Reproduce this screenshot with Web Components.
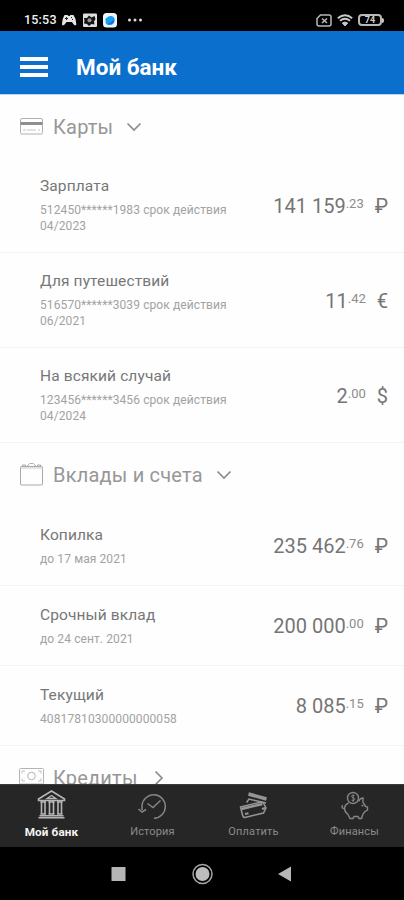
<!DOCTYPE html>
<html lang="ru">
<head>
<meta charset="utf-8">
<title>Мой банк</title>
<style>
    body {
        margin: 0;
        font-family: Roboto, "Liberation Sans", sans-serif;
        background: #fff;
    }
</style>
</head>
<body>
<bank-app></bank-app>

<script>
class StatusBar extends HTMLElement {
    constructor(){
        super();
        this.attachShadow({mode: 'open'})
        this.shadowRoot.innerHTML = `
            <style>
                :host {
                    display: flex;
                    align-items: center;
                    flex: none;
                    height: 31px;
                    padding: 8px 20px 0 24px;
                    box-sizing: border-box;
                    background: #000;
                    color: #f2f2f2;
                }
                .time {
                    width: 37px;
                    font-size: 12.5px;
                    font-weight: 500;
                    line-height: 23px;
                    letter-spacing: 0.2px;
                }
                svg {
                    display: block;
                }
                .right {
                    display: flex;
                    align-items: center;
                    gap: 5px;
                    margin-left: auto;
                    margin-top: 1px;
                }
                .battery {
                    display: flex;
                    align-items: center;
                }
                .level {
                    width: 24px;
                    height: 12px;
                    box-sizing: border-box;
                    border: 2px solid #b8b8b8;
                    border-radius: 4px;
                    font-size: 9px;
                    font-weight: 700;
                    line-height: 9px;
                    text-align: center;
                    color: #d0d0d0;
                }
                .cap {
                    width: 2px;
                    height: 5px;
                    background: #c4c4c4;
                    border-radius: 0 2px 2px 0;
                }
            </style>
            <span class="time">15:53</span>
            <svg width="84" height="16" viewBox="0 0 84 16">
                <path d="M3.5 3h3l1 1h1l1-1h3l2 4 .8 5c0 2-2 1.500-3 0L11 10H5.500L4 12c-1 1.500-3 2-3 0l.7-5z" fill="#e6e6e6"/>
                <path d="M4 6.500h3M5.500 5v3M10 5.500h1M11 7.500h1" stroke="#222" stroke-width="1"/>
                <rect x="22" y="1.500" width="14" height="13.500" rx="1" fill="#dedede"/>
                <path d="M28 3.500l2.500 2 3-1.500 1 3-1.500 2.500.5 3-3-.5-2.500 2-2-2-3-.5.5-3L23 6l3 0z" fill="#151515"/>
                <circle cx="28.500" cy="8.300" r="2" fill="#999"/>
                <rect x="42" y="1" width="14" height="14.500" rx="3.500" fill="#eef6fb"/>
                <path d="M44.500 6.500c2-1 3-3 6-2.500 4 .5 4 6 1.500 8-2 1.500-6 1.500-7-.5-.6-1.500-.5-3.500-.5-5z" fill="#18a0f0"/>
                <path d="M47.500 11c2 0 4-2 5.500-4 .6 3-1 6-5 5.500z" fill="#2269db"/>
                <circle cx="68.500" cy="8" r="1.500" fill="#ddd"/>
                <circle cx="74" cy="8" r="1.500" fill="#ddd"/>
                <circle cx="79.500" cy="8" r="1.500" fill="#ddd"/>
            </svg>
            <div class="right">
                <svg width="16" height="13" viewBox="0 0 16 13" fill="none" stroke="#b8b8b8" stroke-width="1.500">
                    <path d="M4.500 1H13q2 0 2 2v7q0 2-2 2H3q-2 0-2-2V4.500z"/>
                    <path d="M6 4.500l5 4.500M11 4.500L6 9" stroke-width="1.600"/>
                </svg>
                <svg width="16" height="13" viewBox="0 0 16 13" fill="none" stroke="#c8c8c8" stroke-width="1.900">
                    <path d="M.8 4.200Q8-1.700 15.200 4.200"/>
                    <path d="M3 6.800q5-4 10 0"/>
                    <path d="M5.300 9q2.700-2 5.400 0L8 12z" fill="#c8c8c8" stroke-width="1"/>
                </svg>
                <div class="battery"><div class="level">74</div><div class="cap"></div></div>
            </div>
        `;
    }
}

class AppHeader extends HTMLElement {
    constructor(){
        super();
        this.attachShadow({mode: 'open'})
        this.shadowRoot.innerHTML = `
            <style>
                :host {
                    display: flex;
                    align-items: center;
                    flex: none;
                    gap: 28px;
                    height: 63px;
                    padding: 9px 20px 0;
                    box-sizing: border-box;
                    background: #0b6fce;
                    color: #fff;
                }
                .menu {
                    display: grid;
                    gap: 4px;
                    width: 28px;
                    margin-top: -1px;
                }
                .menu i {
                    height: 4px;
                    background: #fff;
                }
                h1 {
                    margin: 0;
                    font-size: 22.5px;
                    font-weight: 700;
                    line-height: 30px;
                }
            </style>
            <div class="menu"><i></i><i></i><i></i></div>
            <h1><slot></slot></h1>
        `;
    }
}

class AccountSection extends HTMLElement {
    constructor(){
        super();
        this.attachShadow({mode: 'open'})
        this.shadowRoot.innerHTML = `
            <style>
                :host {
                    display: block;
                }
                header {
                    display: flex;
                    align-items: center;
                    height: 63px;
                    padding: 3px 0 0 19px;
                    box-sizing: border-box;
                    color: #979797;
                }
                .icon {
                    width: 26px;
                    height: 26px;
                    margin-right: 8px;
                }
                h2 {
                    margin: 0 13px 0 0;
                    font-size: 20px;
                    font-weight: 400;
                    line-height: 26px;
                    letter-spacing: 0.2px;
                }
                svg {
                    display: block;
                }
                :host([collapsed]) .chevron {
                    transform: rotate(-90deg);
                }
            </style>
            <header>
                <div class="icon"><slot name="icon"></slot></div>
                <h2></h2>
                <svg class="chevron" width="16" height="16" viewBox="0 0 16 16" fill="none" stroke="#8c8c8c" stroke-width="1.700"><path d="M1.500 4.500l6.500 6.500 6.500-6.500"/></svg>
            </header>
            <slot></slot>
        `;
    }

    connectedCallback(){
        this.shadowRoot.querySelector('h2').textContent = this.getAttribute('heading');
    }
}

class AccountRow extends HTMLElement {
    constructor(){
        super();
        this.attachShadow({mode: 'open'})
        this.shadowRoot.innerHTML = `
            <style>
                :host {
                    display: flex;
                    align-items: center;
                    justify-content: space-between;
                    height: 80px;
                    padding: 1px 16px 0 40px;
                    box-sizing: border-box;
                    box-shadow: 0 1px 0 #f3f3f3;
                }
                :host([card]) {
                    height: 95px;
                }
                .name {
                    font-size: 15.5px;
                    line-height: 20px;
                    letter-spacing: 0.12px;
                    color: #777;
                }
                .details {
                    width: 200px;
                    margin-top: 6px;
                    font-size: 12px;
                    line-height: 16px;
                    letter-spacing: 0.1px;
                    color: #a2a2a2;
                }
                .amount {
                    display: flex;
                    align-items: flex-start;
                    line-height: 24px;
                    font-size: 20px;
                    color: #757575;
                    white-space: nowrap;
                    margin-top: 1px;
                }
                .cents {
                    font-size: 13px;
                    line-height: 20px;
                    color: #8c8c8c;
                }
                .currency {
                    margin-left: 11px;
                }
            </style>
            <div>
                <div class="name"></div>
                <div class="details"><slot></slot></div>
            </div>
            <div class="amount"><span class="whole"></span><span class="cents"></span><span class="currency"></span></div>
        `;
    }

    connectedCallback(){
        const [whole, cents] = this.getAttribute('amount').split('.');
        this._setText('.whole', whole);
        this._setText('.cents', '.' + cents);
        this._setText('.name', this.getAttribute('name'));
        this._setText('.currency', this.getAttribute('currency'));
    }

    _setText(selector, text){
        this.shadowRoot.querySelector(selector).textContent = text;
    }
}

class TabItem extends HTMLElement {
    constructor(){
        super();
        this.attachShadow({mode: 'open'})
        this.shadowRoot.innerHTML = `
            <style>
                :host {
                    display: flex;
                    flex-direction: column;
                    align-items: center;
                    padding: 5px 0 0 2px;
                    color: #8b8b8b;
                    font-size: 11px;
                    line-height: 16px;
                    letter-spacing: 0.15px;
                }
                :host([active]) {
                    color: #f4f4f4;
                    font-size: 11.7px;
                    font-weight: 700;
                }
                .icon {
                    height: 32px;
                    margin-bottom: 2px;
                }
            </style>
            <div class="icon"><slot name="icon"></slot></div>
            <div><slot></slot></div>
        `;
    }
}

class TabBar extends HTMLElement {
    constructor(){
        super();
        this.attachShadow({mode: 'open'})
        this.shadowRoot.innerHTML = `
            <style>
                :host {
                    display: grid;
                    grid-template-columns: repeat(4, 1fr);
                    flex: none;
                    height: 63px;
                    box-sizing: border-box;
                    background: #262626;
                    border-top: 1px solid #3b3b3b;
                }
            </style>
            <slot></slot>
        `;
    }
}

class SystemNav extends HTMLElement {
    constructor(){
        super();
        this.attachShadow({mode: 'open'})
        this.shadowRoot.innerHTML = `
            <style>
                :host {
                    display: flex;
                    align-items: center;
                    justify-content: center;
                    flex: none;
                    gap: 59px;
                    height: 53px;
                    background: #000;
                }
            </style>
            <svg width="24" height="24" viewBox="0 0 24 24"><rect x="4.500" y="5" width="14" height="14" fill="#b5b5b5"/></svg>
            <svg width="24" height="24" viewBox="0 0 24 24"><circle cx="12.500" cy="12" r="9.500" fill="none" stroke="#a5a5a5" stroke-width="1.500"/><circle cx="12.500" cy="12" r="7" fill="#bcbcbc"/></svg>
            <svg width="24" height="24" viewBox="0 0 24 24"><path d="M5 12L18 4.500v15z" fill="#b8b8b8"/></svg>
        `;
    }
}

class BankApp extends HTMLElement {
    constructor(){
        super();
        this.attachShadow({mode: 'open'})
        this.shadowRoot.innerHTML = `
            <style>
                :host {
                    display: flex;
                    flex-direction: column;
                    width: 404px;
                    height: 900px;
                    overflow: hidden;
                }
                main {
                    flex: 1;
                    min-height: 0;
                    overflow: hidden;
                    background: #fefefe;
                    border-top: 1px solid #b9d6f0;
                }
                account-section:first-child {
                    margin-top: -1px;
                }
                svg {
                    display: block;
                    fill: none;
                }
            </style>
            <status-bar></status-bar>
            <app-header>Мой банк</app-header>
            <main>
                <account-section heading="Карты">
                    <svg slot="icon" width="26" height="26" viewBox="0 0 26 26" stroke="#b0b0b0">
                        <rect x="1.500" y="4.500" width="22" height="15.500" rx="1.500"/>
                        <path d="M1.500 9.500h22" stroke="#8e8e8e" stroke-width="3"/>
                        <path d="M4 16h3M8 16h9M19 16h2" stroke-width=".7"/>
                    </svg>
                    <account-row card name="Зарплата" amount="141 159.23" currency="₽">512450******1983 срок действия 04/2023</account-row>
                    <account-row card name="Для путешествий" amount="11.42" currency="€">516570******3039 срок действия 06/2021</account-row>
                    <account-row card name="На всякий случай" amount="2.00" currency="$">123456******3456 срок действия 04/2024</account-row>
                </account-section>
                <account-section heading="Вклады и счета">
                    <svg slot="icon" width="26" height="26" viewBox="0 0 26 26" stroke="#a8a8a8">
                        <rect x="1.500" y="4.500" width="22" height="18.500" rx=".8"/>
                        <path d="M1.500 6h22" stroke="#c8c8c8"/>
                        <path d="M3.500 4.500V3h3v1.500M18.500 4.500V3h3v1.500M8 4q1 0 1.500-1.500.5-1 2-1h2q1.500 0 2 1Q16 4 17 4"/>
                    </svg>
                    <account-row name="Копилка" amount="235 462.76" currency="₽">до 17 мая 2021</account-row>
                    <account-row name="Срочный вклад" amount="200 000.00" currency="₽">до 24 сент. 2021</account-row>
                    <account-row name="Текущий" amount="8 085.15" currency="₽">40817810300000000058</account-row>
                </account-section>
                <account-section heading="Кредиты" collapsed>
                    <svg slot="icon" width="26" height="26" viewBox="0 0 26 26" stroke="#b4b4b4">
                        <rect x=".5" y="3.500" width="24" height="15.500" rx="1"/>
                        <circle cx="12.500" cy="11" r="3.800"/>
                        <path d="M3 8.500V6h3M19 6h3v2.500M3 13.500V16h3M19 16h3v-2.500" stroke-width=".8"/>
                    </svg>
                </account-section>
            </main>
            <tab-bar>
                <tab-item active>
                    <svg slot="icon" width="32" height="32" viewBox="0 0 32 32" stroke="#b5b5b5" stroke-width="1.600">
                        <path d="M2.500 10.500V9L15.500 1l13 8v1.500z"/>
                        <path d="M11 8.500L15.500 5.500 20 8.500z" stroke-width="1.300"/>
                        <path d="M5.500 11v13M9 11v13M13.500 11v13M17.500 11v13M22 11v13M25.500 11v13"/>
                        <path d="M4.500 12h5.500M12.500 12H18.500M21 12h5.500M4.500 24h5.500M12.500 24H18.500M21 24h5.500M2.500 27.700h26M3.500 25.700h24"/>
                    </svg>
                    Мой банк
                </tab-item>
                <tab-item>
                    <svg slot="icon" width="32" height="32" viewBox="0 0 32 32" stroke="#858585" stroke-width="1.500">
                        <path d="M5 20V15.500A11.700 11.700 0 1 1 17 28.200"/>
                        <path d="M1.500 19L5 22l4-2.500"/>
                        <path d="M10.500 13.500l5.500 4 7.500-7"/>
                    </svg>
                    История
                </tab-item>
                <tab-item>
                    <svg slot="icon" width="32" height="32" viewBox="0 0 32 32" stroke="#969696" stroke-width="1.500">
                        <path d="M10.500 4l18 5" stroke-width="3.500"/>
                        <path d="M8.500 12.500l2.500-3.500 17 4"/>
                        <path d="M2.500 17l21-5q2 0 2.500 2l2 4-2.500 5L7 27.500Q5 27.500 4.500 25z"/>
                        <path d="M3.500 19l21-5" stroke-width="2.400"/>
                        <path d="M7 24l3.500-.8" stroke-width="2"/>
                        <path d="M24 19l3-1" stroke-width="2"/>
                    </svg>
                    Оплатить
                </tab-item>
                <tab-item>
                    <svg slot="icon" width="32" height="32" viewBox="0 0 32 32" stroke="#858585" stroke-width="1.400">
                        <circle cx="14" cy="8" r="5.500"/>
                        <path d="M15.500 5.500q-3-1-3 .8c0 1.600 3.300 1.200 3.300 3q0 1.700-3.300.9M14.200 4.500V12" stroke-width="1"/>
                        <path d="M9.500 13c-3 1.500-4 3.500-4 5.500 0 3 1.500 4.500 3.500 6l2 4h3l1-2h4l1 2h2.500l1.500-4.500 2-2.500 2.500-1.500v-3l-2-.5c-.5-1.500-1-2.500-2.500-4V8q-3 0-4.500 3.500"/>
                        <path d="M5.500 18.500q-3.500 0-2-3.500M22.500 15.500h2"/>
                    </svg>
                    Финансы
                </tab-item>
            </tab-bar>
            <system-nav></system-nav>
        `;
    }
}

customElements.define('status-bar',StatusBar)
customElements.define('app-header',AppHeader)
customElements.define('account-section',AccountSection)
customElements.define('account-row',AccountRow)
customElements.define('tab-item',TabItem)
customElements.define('tab-bar',TabBar)
customElements.define('system-nav',SystemNav)
customElements.define('bank-app',BankApp)
</script>
</body>
</html>
